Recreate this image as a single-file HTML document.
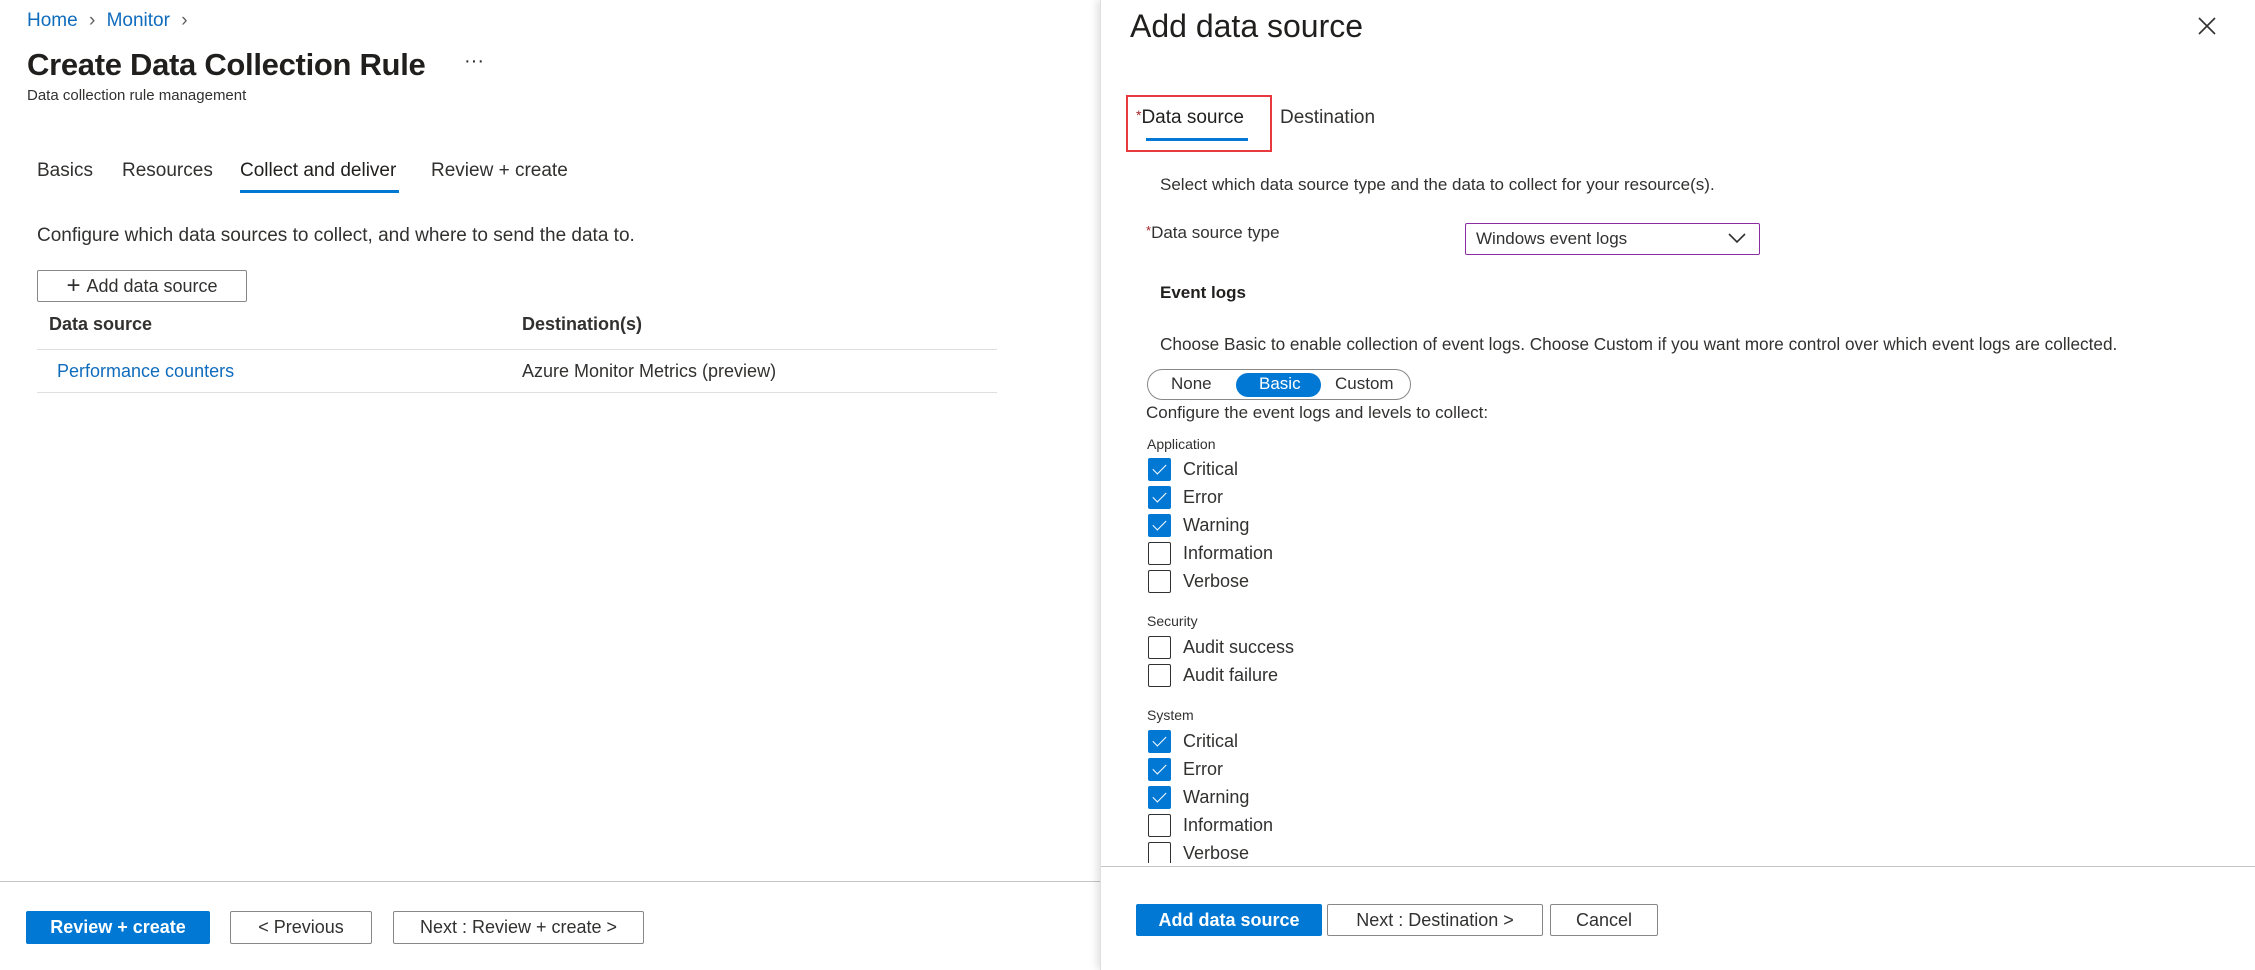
<!DOCTYPE html>
<html><head><meta charset="utf-8"><style>
*{box-sizing:border-box;margin:0;padding:0}
body{width:2255px;height:970px;overflow:hidden;background:#fff;font-family:"Liberation Sans",sans-serif;color:#323130;position:relative;font-size:18px}
.a{position:absolute;white-space:nowrap}
.blue{color:#0f6cbd}
.btn{position:absolute;border:1px solid #8a8886;border-radius:2px;background:#fff;display:flex;align-items:center;justify-content:center;font-size:18px;color:#323130}
.pri{background:#0078d4;border-color:#0078d4;color:#fff;font-weight:bold}
.cb{position:absolute;left:1148px;width:23px;height:23px;border:1.5px solid #323130;border-radius:2px;background:#fff}
.cb.on{background:#0078d4;border-color:#0078d4}
.cb.on::after{content:"";position:absolute;left:7px;top:2px;width:6px;height:12px;border:solid #fff;border-width:0 1.5px 1.5px 0;transform:rotate(45deg)}
.lbl{position:absolute;left:1183px;font-size:18px;line-height:24px}
.sm{font-size:14px}
</style></head><body>
<div class="a blue" style="left:27px;top:10px;font-size:19px">Home <span style="color:#605e5c;margin:0 6px">&#x203A;</span> Monitor <span style="color:#605e5c;margin-left:6px">&#x203A;</span></div>
<div class="a" style="left:27px;top:47px;font-size:31px;font-weight:bold;color:#201f1e;letter-spacing:-0.3px">Create Data Collection Rule</div>
<div class="a" style="left:464px;top:50px;font-size:20px">···</div>
<div class="a" style="left:27px;top:87px;font-size:15px;color:#323130">Data collection rule management</div>
<div class="a" style="left:37px;top:160px;font-size:19px">Basics</div>
<div class="a" style="left:122px;top:160px;font-size:19px">Resources</div>
<div class="a" style="left:240px;top:160px;font-size:19px;color:#201f1e">Collect and deliver</div>
<div class="a" style="left:240px;top:190px;width:159px;height:3px;background:#0078d4"></div>
<div class="a" style="left:431px;top:160px;font-size:19px">Review + create</div>
<div class="a" style="left:37px;top:225px;font-size:19px">Configure which data sources to collect, and where to send the data to.</div>
<div class="btn" style="left:37px;top:270px;width:210px;height:32px;font-size:18px"><span style="font-size:24px;margin-right:6px;line-height:1">+</span>Add data source</div>
<div class="a" style="left:49px;top:314px;font-size:18px;font-weight:bold">Data source</div>
<div class="a" style="left:522px;top:314px;font-size:18px;font-weight:bold">Destination(s)</div>
<div class="a" style="left:37px;top:349px;width:960px;height:1px;background:#e1dfdd"></div>
<div class="a blue" style="left:57px;top:361px;font-size:18px">Performance counters</div>
<div class="a" style="left:522px;top:361px;font-size:18px">Azure Monitor Metrics (preview)</div>
<div class="a" style="left:37px;top:392px;width:960px;height:1px;background:#e1dfdd"></div>
<div class="a" style="left:0;top:881px;width:1100px;height:1px;background:#c8c6c4"></div>
<div class="btn pri" style="left:26px;top:911px;width:184px;height:33px">Review + create</div>
<div class="btn" style="left:230px;top:911px;width:142px;height:33px">&lt; Previous</div>
<div class="btn" style="left:393px;top:911px;width:251px;height:33px">Next : Review + create &gt;</div>
<div class="a" style="left:1100px;top:0;width:1155px;height:970px;background:#fff;box-shadow:-3px 0 8px rgba(0,0,0,.12);border-left:1px solid #e1dfdd"></div>
<div class="a" style="left:1130px;top:8px;font-size:32px;color:#201f1e">Add data source</div>
<svg class="a" style="left:2198px;top:17px" width="18" height="18" viewBox="0 0 18 18"><path d="M1 1L17 17M17 1L1 17" stroke="#323130" stroke-width="1.6"/></svg>
<div class="a" style="left:1126px;top:95px;width:146px;height:57px;border:2px solid #e8393f"></div>
<div class="a" style="left:1136px;top:107px;font-size:19px;color:#201f1e"><span style="color:#a4262c;font-size:14px;vertical-align:top">*</span>Data source</div>
<div class="a" style="left:1146px;top:138px;width:102px;height:3px;background:#0078d4"></div>
<div class="a" style="left:1280px;top:107px;font-size:19px">Destination</div>
<div class="a" style="left:1160px;top:175px;font-size:17px">Select which data source type and the data to collect for your resource(s).</div>
<div class="a" style="left:1146px;top:223px;font-size:17px"><span style="color:#a4262c;font-size:13px;vertical-align:top">*</span>Data source type</div>
<div class="a" style="left:1465px;top:223px;width:295px;height:32px;border:1.5px solid #8a2da5;border-radius:2px"></div>
<div class="a" style="left:1476px;top:229px;font-size:17px">Windows event logs</div>
<svg class="a" style="left:1728px;top:232px" width="18" height="12" viewBox="0 0 18 12"><path d="M1 2L9 10L17 2" stroke="#323130" stroke-width="1.6" fill="none"/></svg>
<div class="a" style="left:1160px;top:283px;font-size:17px;font-weight:bold;color:#201f1e">Event logs</div>
<div class="a" style="left:1160px;top:334px;font-size:17.2px">Choose Basic to enable collection of event logs. Choose Custom if you want more control over which event logs are collected.</div>
<div class="a" style="left:1147px;top:369px;width:264px;height:31px;border:1px solid #8a8886;border-radius:16px"></div>
<div class="a" style="left:1236px;top:373px;width:85px;height:24px;background:#0078d4;border-radius:12px"></div>
<div class="a" style="left:1171px;top:374px;font-size:17px">None</div>
<div class="a" style="left:1259px;top:374px;font-size:17px;color:#fff">Basic</div>
<div class="a" style="left:1335px;top:374px;font-size:17px">Custom</div>
<div class="a" style="left:1146px;top:403px;font-size:17px">Configure the event logs and levels to collect:</div>
<div class="a sm" style="left:1147px;top:436px">Application</div>
<div class="cb on" style="top:458px"></div><div class="lbl" style="top:457px">Critical</div>
<div class="cb on" style="top:486px"></div><div class="lbl" style="top:485px">Error</div>
<div class="cb on" style="top:514px"></div><div class="lbl" style="top:513px">Warning</div>
<div class="cb" style="top:542px"></div><div class="lbl" style="top:541px">Information</div>
<div class="cb" style="top:570px"></div><div class="lbl" style="top:569px">Verbose</div>
<div class="a sm" style="left:1147px;top:613px">Security</div>
<div class="cb" style="top:636px"></div><div class="lbl" style="top:635px">Audit success</div>
<div class="cb" style="top:664px"></div><div class="lbl" style="top:663px">Audit failure</div>
<div class="a sm" style="left:1147px;top:707px">System</div>
<div class="cb on" style="top:730px"></div><div class="lbl" style="top:729px">Critical</div>
<div class="cb on" style="top:758px"></div><div class="lbl" style="top:757px">Error</div>
<div class="cb on" style="top:786px"></div><div class="lbl" style="top:785px">Warning</div>
<div class="cb" style="top:814px"></div><div class="lbl" style="top:813px">Information</div>
<div style="position:absolute;left:1100px;top:840px;width:400px;height:23px;overflow:hidden">
<div class="cb" style="left:48px;top:2px"></div><div class="lbl" style="left:83px;top:1px">Verbose</div></div>
<div class="a" style="left:1101px;top:866px;width:1154px;height:1px;background:#c8c6c4"></div>
<div class="btn pri" style="left:1136px;top:904px;width:186px;height:32px">Add data source</div>
<div class="btn" style="left:1327px;top:904px;width:216px;height:32px">Next : Destination &gt;</div>
<div class="btn" style="left:1550px;top:904px;width:108px;height:32px">Cancel</div>
</body></html>
